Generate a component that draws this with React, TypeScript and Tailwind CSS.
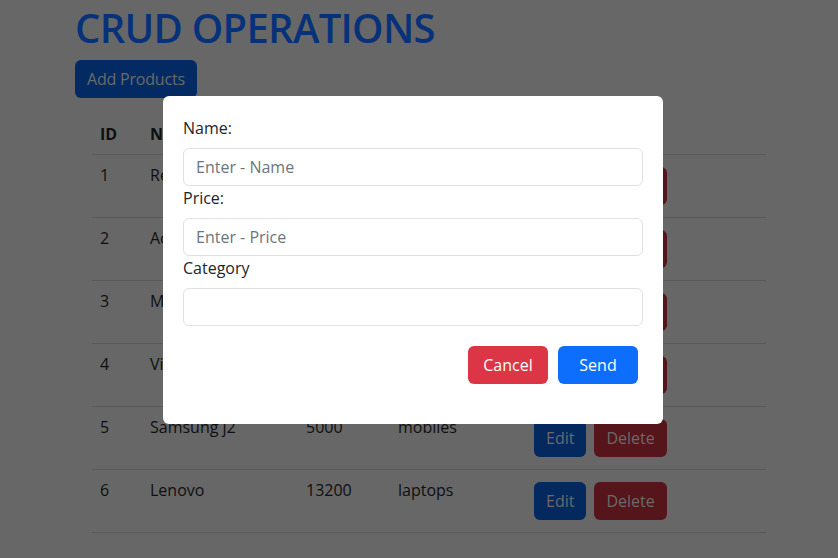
const rows = [
  { id: 1, name: "Redmi note 9", price: "12000", category: "mobiles" },
  { id: 2, name: "Acer aspire", price: "45000", category: "laptops" },
  { id: 3, name: "Moto g60", price: "18000", category: "mobiles" },
  { id: 4, name: "Vivo y21", price: "14000", category: "mobiles" },
  { id: 5, name: "Samsung j2", price: "5000", category: "mobiles" },
  { id: 6, name: "Lenovo", price: "13200", category: "laptops" },
];

const font = { fontFamily: '"Open Sans", "Noto Sans", sans-serif' };

function Field({ label, placeholder }: { label: string; placeholder: string }) {
  return (
    <div>
      <label className="block text-[16px] leading-6 text-[#212529] mb-2">{label}</label>
      <input
        placeholder={placeholder}
        className="block w-full h-[38px] px-3 rounded-md border border-[#dee2e6] text-[16px] text-[#212529] placeholder:text-[#6c757d] outline-none"
      />
    </div>
  );
}

export default function App() {
  return (
    <div className="relative min-h-screen bg-[#676767] text-[#0e0f10]" style={font}>
      <div className="px-[75px] pt-[4px]">
        <h1 className="text-[40px] leading-[48px] font-semibold tracking-[-0.7px] text-[#07327a] mb-2">CRUD OPERATIONS</h1>
        <button className="h-[38px] px-3 rounded-md bg-[#032a62] text-[16px] tracking-[-0.2px] text-[#6a6a6a]">Add Products</button>
        <table className="mt-4 ml-[17px] w-[674px] border-collapse text-[16px] leading-6">
          <thead>
            <tr className="border-b border-[#5a5a5a]">
              <th className="w-[50px] p-2 text-left font-bold">ID</th>
              <th className="w-[156px] p-2 text-left font-bold">Name</th>
              <th className="w-[92px] p-2 text-left font-bold">Price</th>
              <th className="w-[132px] p-2 text-left font-bold">Category</th>
              <th className="p-2 text-left font-bold">Actions</th>
            </tr>
          </thead>
          <tbody>
            {rows.map((r) => (
              <tr key={r.id} className="border-b border-[#5a5a5a] align-top">
                <td className="p-2">{r.id}</td>
                <td className="p-2">{r.name}</td>
                <td className="p-2">{r.price}</td>
                <td className="p-2">{r.category}</td>
                <td className="p-2">
                  <button className="m-1 h-[38px] px-3 rounded-md bg-[#03295f] text-[#6a6a6a]">Edit</button>
                  <button className="m-1 h-[38px] px-3 rounded-md bg-[#56141b] text-[#6a6a6a]">Delete</button>
                </td>
              </tr>
            ))}
          </tbody>
        </table>
      </div>

      <div className="absolute left-[163px] top-[96px] w-[500px] rounded-md bg-white p-5">
        <Field label="Name:" placeholder="Enter - Name" />
        <Field label="Price:" placeholder="Enter - Price" />
        <Field label="Category" placeholder="" />
        <div className="flex justify-end gap-[10px] mt-5 mb-5 pr-[5px]">
          <button className="w-20 h-[38px] rounded-md bg-[#dc3545] text-white text-[16px]">Cancel</button>
          <button className="w-20 h-[38px] rounded-md bg-[#0d6efd] text-white text-[16px]">Send</button>
        </div>
      </div>
    </div>
  );
}
